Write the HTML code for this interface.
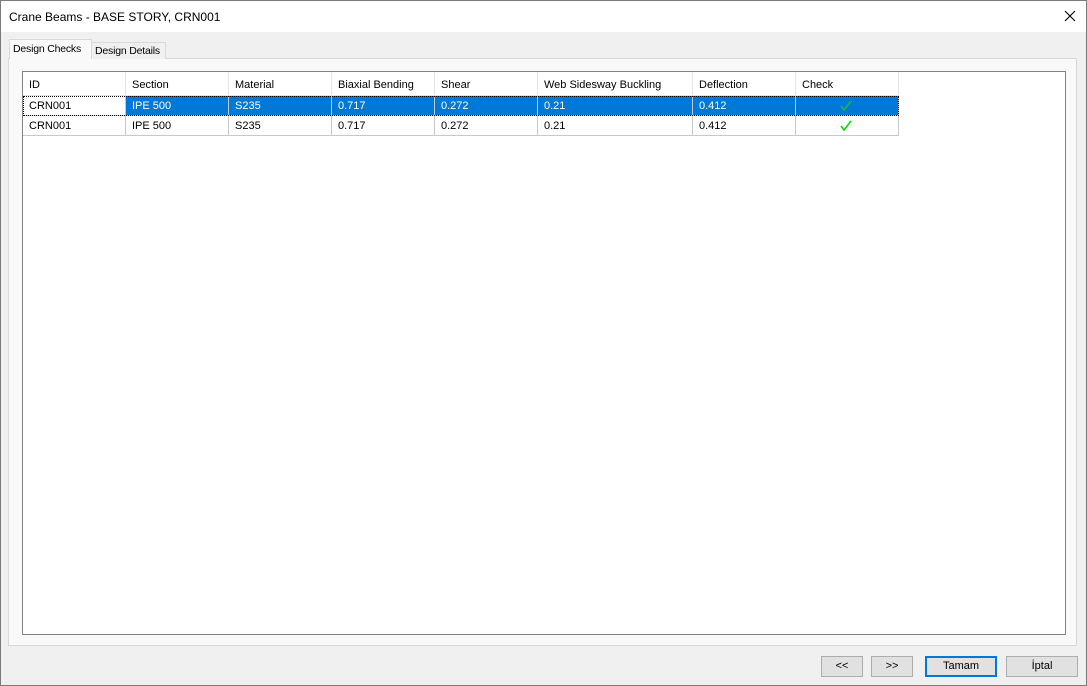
<!DOCTYPE html>
<html><head><style>
*{box-sizing:border-box;margin:0;padding:0}
body{width:1087px;height:686px;background:#f0f0f0;font-family:"Liberation Sans",sans-serif;font-size:11px;color:#000;position:relative;overflow:hidden;border:1px solid #7a7a7a}
.abs{position:absolute}
.title{left:0;top:0;width:1085px;height:31px;background:#fff}
.tab{height:18px;border:1px solid #d9d9d9;border-bottom:none;padding:2px 3px;background:#f0f0f0;font-size:10.5px;letter-spacing:-0.2px}
.panel{left:7px;top:57px;width:1069px;height:588px;border:1px solid #d9d9d9;background:#f9f9f9}
.grid{left:21px;top:70px;width:1044px;height:564px;border:1px solid #828282;background:#fff}
.c{position:absolute;height:20px;line-height:20px;padding-left:6px;border-right:1px solid #c8c8c8;border-bottom:1px solid #c8c8c8;white-space:nowrap}
.sel{background:#0078d7;color:#fff}
.btn{position:absolute;top:655px;height:21px;border:1px solid #adadad;background:#e1e1e1;text-align:center;line-height:19px;font-size:11px}
</style></head><body>
<div class="abs title"><span class="abs" style="left:8px;top:9px;font-size:12px">Crane Beams - BASE STORY, CRN001</span>
<svg class="abs" style="left:1063px;top:9px" width="12" height="12"><path d="M1 1L11 11M11 1L1 11" stroke="#000" stroke-width="1.1"/></svg></div>
<div class="abs panel"></div>
<div class="abs tab" style="left:8px;top:38px;height:20px;background:#f9f9f9;z-index:2;padding-top:3px;width:83px">Design Checks</div>
<div class="abs tab" style="left:90px;top:41px;height:17px;padding-top:2px;width:75px">Design Details</div>
<div class="abs grid" id="g"></div>
<script>
var cols=[0,103,206,309,412,515,670,773,876];
var hdr=["ID","Section","Material","Biaxial Bending","Shear","Web Sidesway Buckling","Deflection","Check"];
var row=["CRN001","IPE 500","S235","0.717","0.272","0.21","0.412",""];
var g=document.getElementById('g'),h='';
for(var i=0;i<8;i++){
 var l=cols[i],w=cols[i+1]-cols[i];
 h+='<div class="c" style="left:'+l+'px;top:0;width:'+w+'px;height:24px;line-height:26px;border-bottom:1px solid #e5e5e5;border-right-color:#e5e5e5">'+hdr[i]+'</div>';
 for(var r=0;r<2;r++){
  var cls=(r==0&&i>0)?'c sel':'c';
  var t=row[i];
  if(i==7)t='<svg style="position:absolute;left:44px;top:4px" width="12" height="12"><path d="M1 6L4 10L11 1" stroke="'+(r==0?'#23b14d':'#00e000')+'" stroke-width="1.6" fill="none"/></svg>';
  h+='<div class="'+cls+'" style="left:'+l+'px;top:'+(24+r*20)+'px;width:'+w+'px">'+t+'</div>';
 }
}
h+='<div style="position:absolute;left:0;top:24px;width:876px;height:20px;border:1px dotted #000"></div>';
g.innerHTML=h;
</script>
<div class="btn" style="left:820px;width:42px">&lt;&lt;</div>
<div class="btn" style="left:870px;width:42px">&gt;&gt;</div>
<div class="btn" style="left:924px;width:72px;border:2px solid #0078d7;line-height:17px">Tamam</div>
<div class="btn" style="left:1005px;width:72px">İptal</div>
</body></html>
